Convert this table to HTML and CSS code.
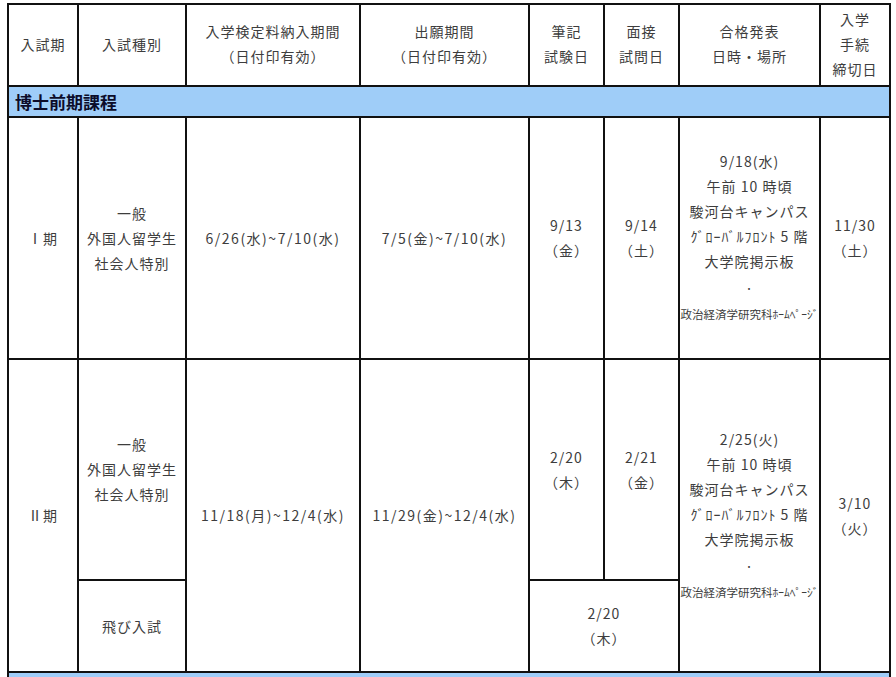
FILE: index.html
```html
<!DOCTYPE html>
<html lang="ja">
<head>
<meta charset="utf-8">
<title>入試日程</title>
<link rel="stylesheet" href="styles.css">
</head>
<body>
<table class="schedule">
  <colgroup>
    <col class="c1"><col class="c2"><col class="c3"><col class="c4"><col class="c5"><col class="c6"><col class="c7"><col class="c8">
  </colgroup>
  <tr class="head">
    <th>入試期</th>
    <th>入試種別</th>
    <th>入学検定料納入期間<br>（日付印有効）</th>
    <th>出願期間<br>（日付印有効）</th>
    <th>筆記<br>試験日</th>
    <th>面接<br>試問日</th>
    <th>合格発表<br>日時・場所</th>
    <th>入学<br>手続<br>締切日</th>
  </tr>
  <tr class="section">
    <td colspan="8">博士前期課程</td>
  </tr>
  <tr class="r1">
    <td>Ⅰ期</td>
    <td>一般<br>外国人留学生<br>社会人特別</td>
    <td class="range">6/26(水)~7/10(水)</td>
    <td class="range">7/5(金)~7/10(水)</td>
    <td>9/13<br>（金）</td>
    <td>9/14<br>（土）</td>
    <td class="announce">9/18(水)<br>午前 10 時頃<br>駿河台キャンパス<br>ｸﾞﾛｰﾊﾞﾙﾌﾛﾝﾄ 5 階<br>大学院掲示板<br><span class="dot">・</span><br><span class="small">政治経済学研究科ﾎｰﾑﾍﾟｰｼﾞ</span></td>
    <td>11/30<br>（土）</td>
  </tr>
  <tr class="r2a">
    <td rowspan="2">Ⅱ期</td>
    <td>一般<br>外国人留学生<br>社会人特別</td>
    <td rowspan="2" class="range">11/18(月)~12/4(水)</td>
    <td rowspan="2" class="range">11/29(金)~12/4(水)</td>
    <td>2/20<br>（木）</td>
    <td>2/21<br>（金）</td>
    <td rowspan="2" class="announce">2/25(火)<br>午前 10 時頃<br>駿河台キャンパス<br>ｸﾞﾛｰﾊﾞﾙﾌﾛﾝﾄ 5 階<br>大学院掲示板<br><span class="dot">・</span><br><span class="small">政治経済学研究科ﾎｰﾑﾍﾟｰｼﾞ</span></td>
    <td rowspan="2">3/10<br>（火）</td>
  </tr>
  <tr class="r2b">
    <td>飛び入試</td>
    <td colspan="2">2/20<br>（木）</td>
  </tr>
  <tr class="section">
    <td colspan="8">&nbsp;</td>
  </tr>
</table>
</body>
</html>
```

FILE: styles.css
```css
html, body {
  margin: 0;
  padding: 0;
  background: #ffffff;
  overflow: hidden;
}
body {
  padding: 3px 0 0 7px;
  font-family: "Noto Sans CJK JP", "Noto Sans", sans-serif;
  color: #3d3d3d;
}
.schedule {
  border-collapse: collapse;
  table-layout: fixed;
  width: 884px;
  border: 2px solid #111;
  font-size: 14px;
  line-height: 25px;
  letter-spacing: 1px;
}
.c1 { width: 70px; }
.c2 { width: 108px; }
.c3 { width: 174px; }
.c4 { width: 169px; }
.c5 { width: 75px; }
.c6 { width: 75px; }
.c7 { width: 141px; }
.c8 { width: 70px; }
.schedule th,
.schedule td {
  border: 2px solid #111;
  padding: 0;
  text-align: center;
  vertical-align: middle;
  font-weight: normal;
}
.head { height: 82px; }
.head th { padding-bottom: 2px; }
.section { height: 31px; }
.section td {
  background: #9fcdf8;
  text-align: left;
  padding-left: 6px;
  font-size: 17px;
  font-weight: bold;
  color: #0c0c2a;
  letter-spacing: 0;
}
.r1 { height: 242px; }
.r2a { height: 221px; }
.r2b { height: 92px; }
.range { letter-spacing: 1.5px; }
.announce { line-height: 25px; }
.dot { font-size: 9px; }
.small {
  font-size: 11.5px;
  letter-spacing: 0;
}
```
